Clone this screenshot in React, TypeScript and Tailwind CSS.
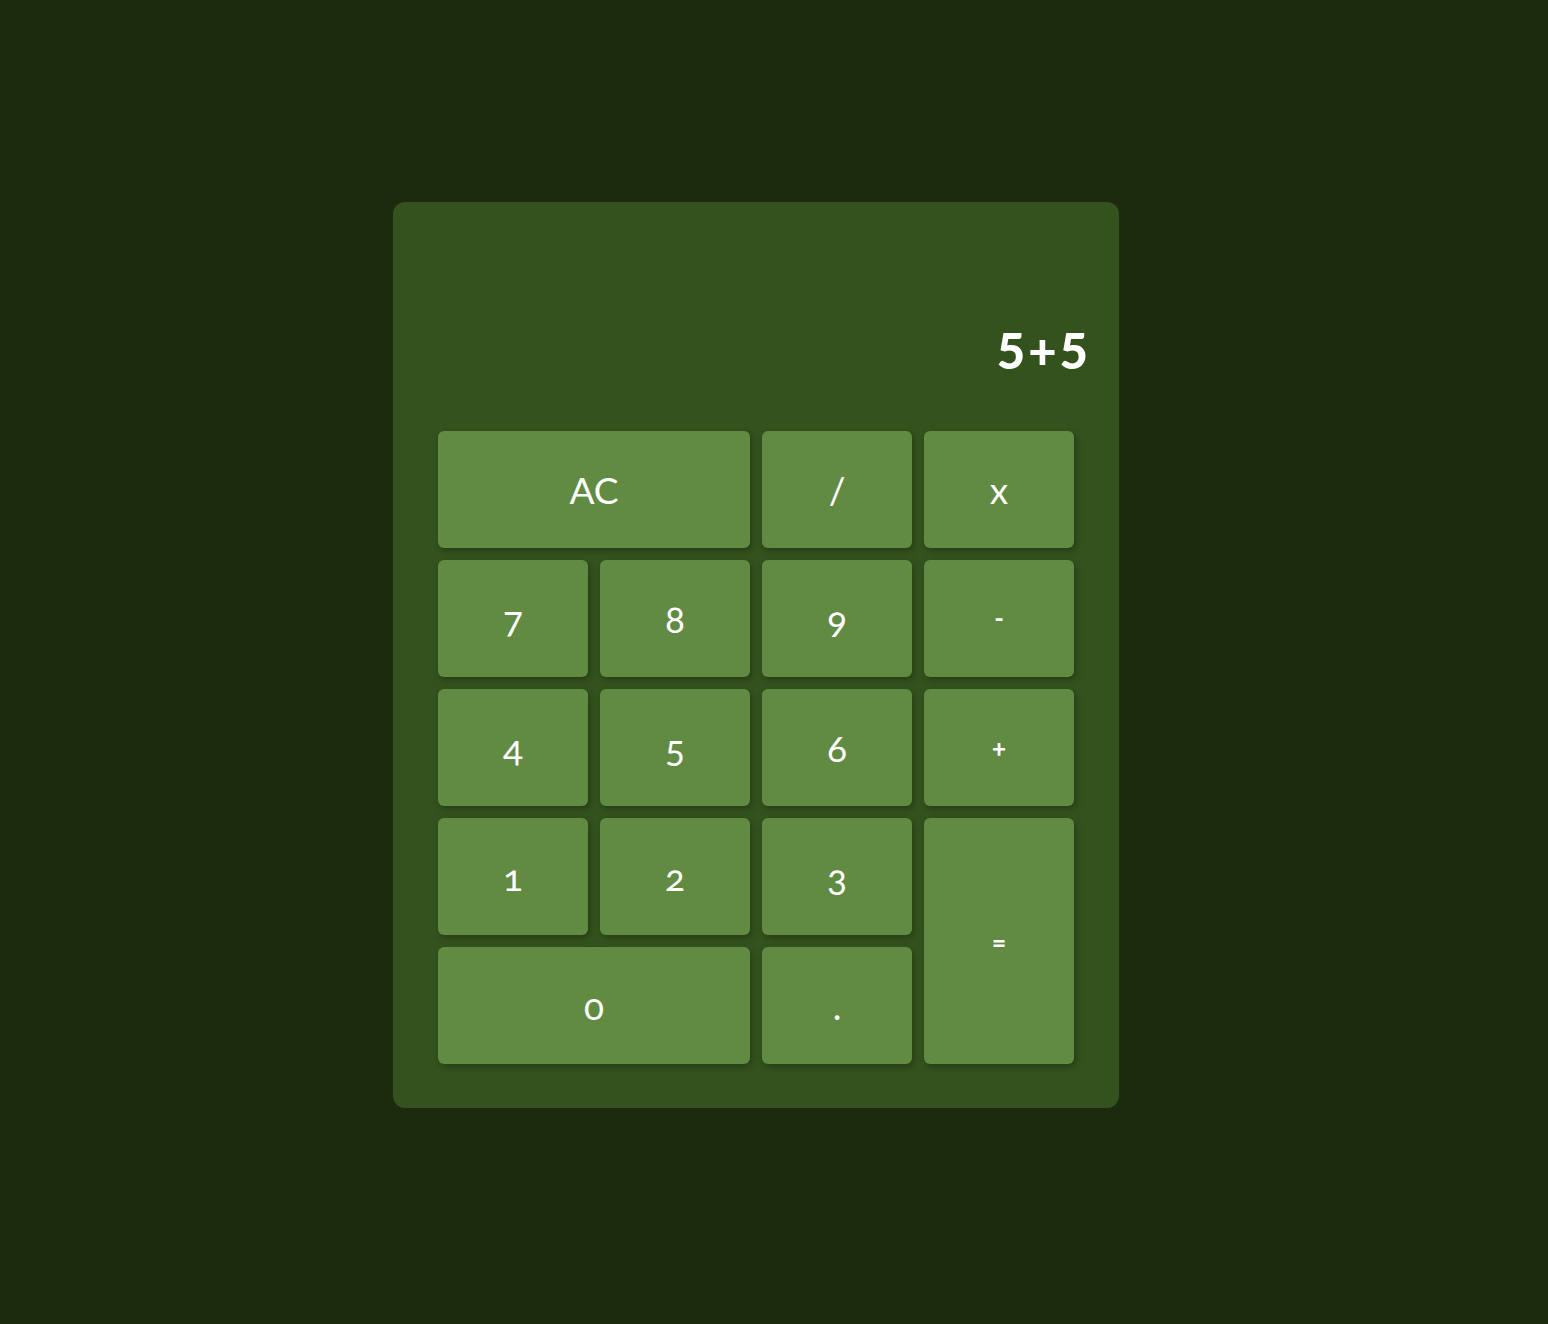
const keys: { label: string; span?: string; small?: boolean }[] = [
  { label: "AC", span: "col-span-2" },
  { label: "/" },
  { label: "x" },
  { label: "7" },
  { label: "8" },
  { label: "9" },
  { label: "-", small: true },
  { label: "4" },
  { label: "5" },
  { label: "6" },
  { label: "+", small: true },
  { label: "1" },
  { label: "2" },
  { label: "3" },
  { label: "=", span: "row-span-2", small: true },
  { label: "0", span: "col-span-2" },
  { label: "." },
];

export default function App() {
  return (
    <div className="min-h-[1324px] w-full bg-[#1c2b0e] pt-[202px] pl-[393px]">
      <div className="w-[726px] h-[906px] rounded-[12px] bg-[#33521d] px-[45px] pb-[44px] flex flex-col">
        {/* Display */}
        <div className="h-[229px] flex items-center justify-end -mr-[14px] pt-[67px]">
          <span className="text-white text-[49px] font-black font-['Lato',sans-serif] leading-none tracking-[3px] -mr-[3px]">
            5+5
          </span>
        </div>

        {/* Keypad */}
        <div className="grid grid-cols-[repeat(4,150px)] grid-rows-[repeat(5,117px)] gap-x-[12px] gap-y-[12px]">
          {keys.map((k) => (
            <button
              key={k.label}
              className={`${k.span ?? ""} ${k.small ? "text-[26px] font-bold" : "text-[37px]"} flex items-center justify-center rounded-[6px] bg-[#618b42] text-white font-['Lato',sans-serif] oldstyle-nums shadow-[2px_3px_6px_rgba(0,0,0,0.25)]`}
            >
              {k.label}
            </button>
          ))}
        </div>
      </div>
    </div>
  );
}
